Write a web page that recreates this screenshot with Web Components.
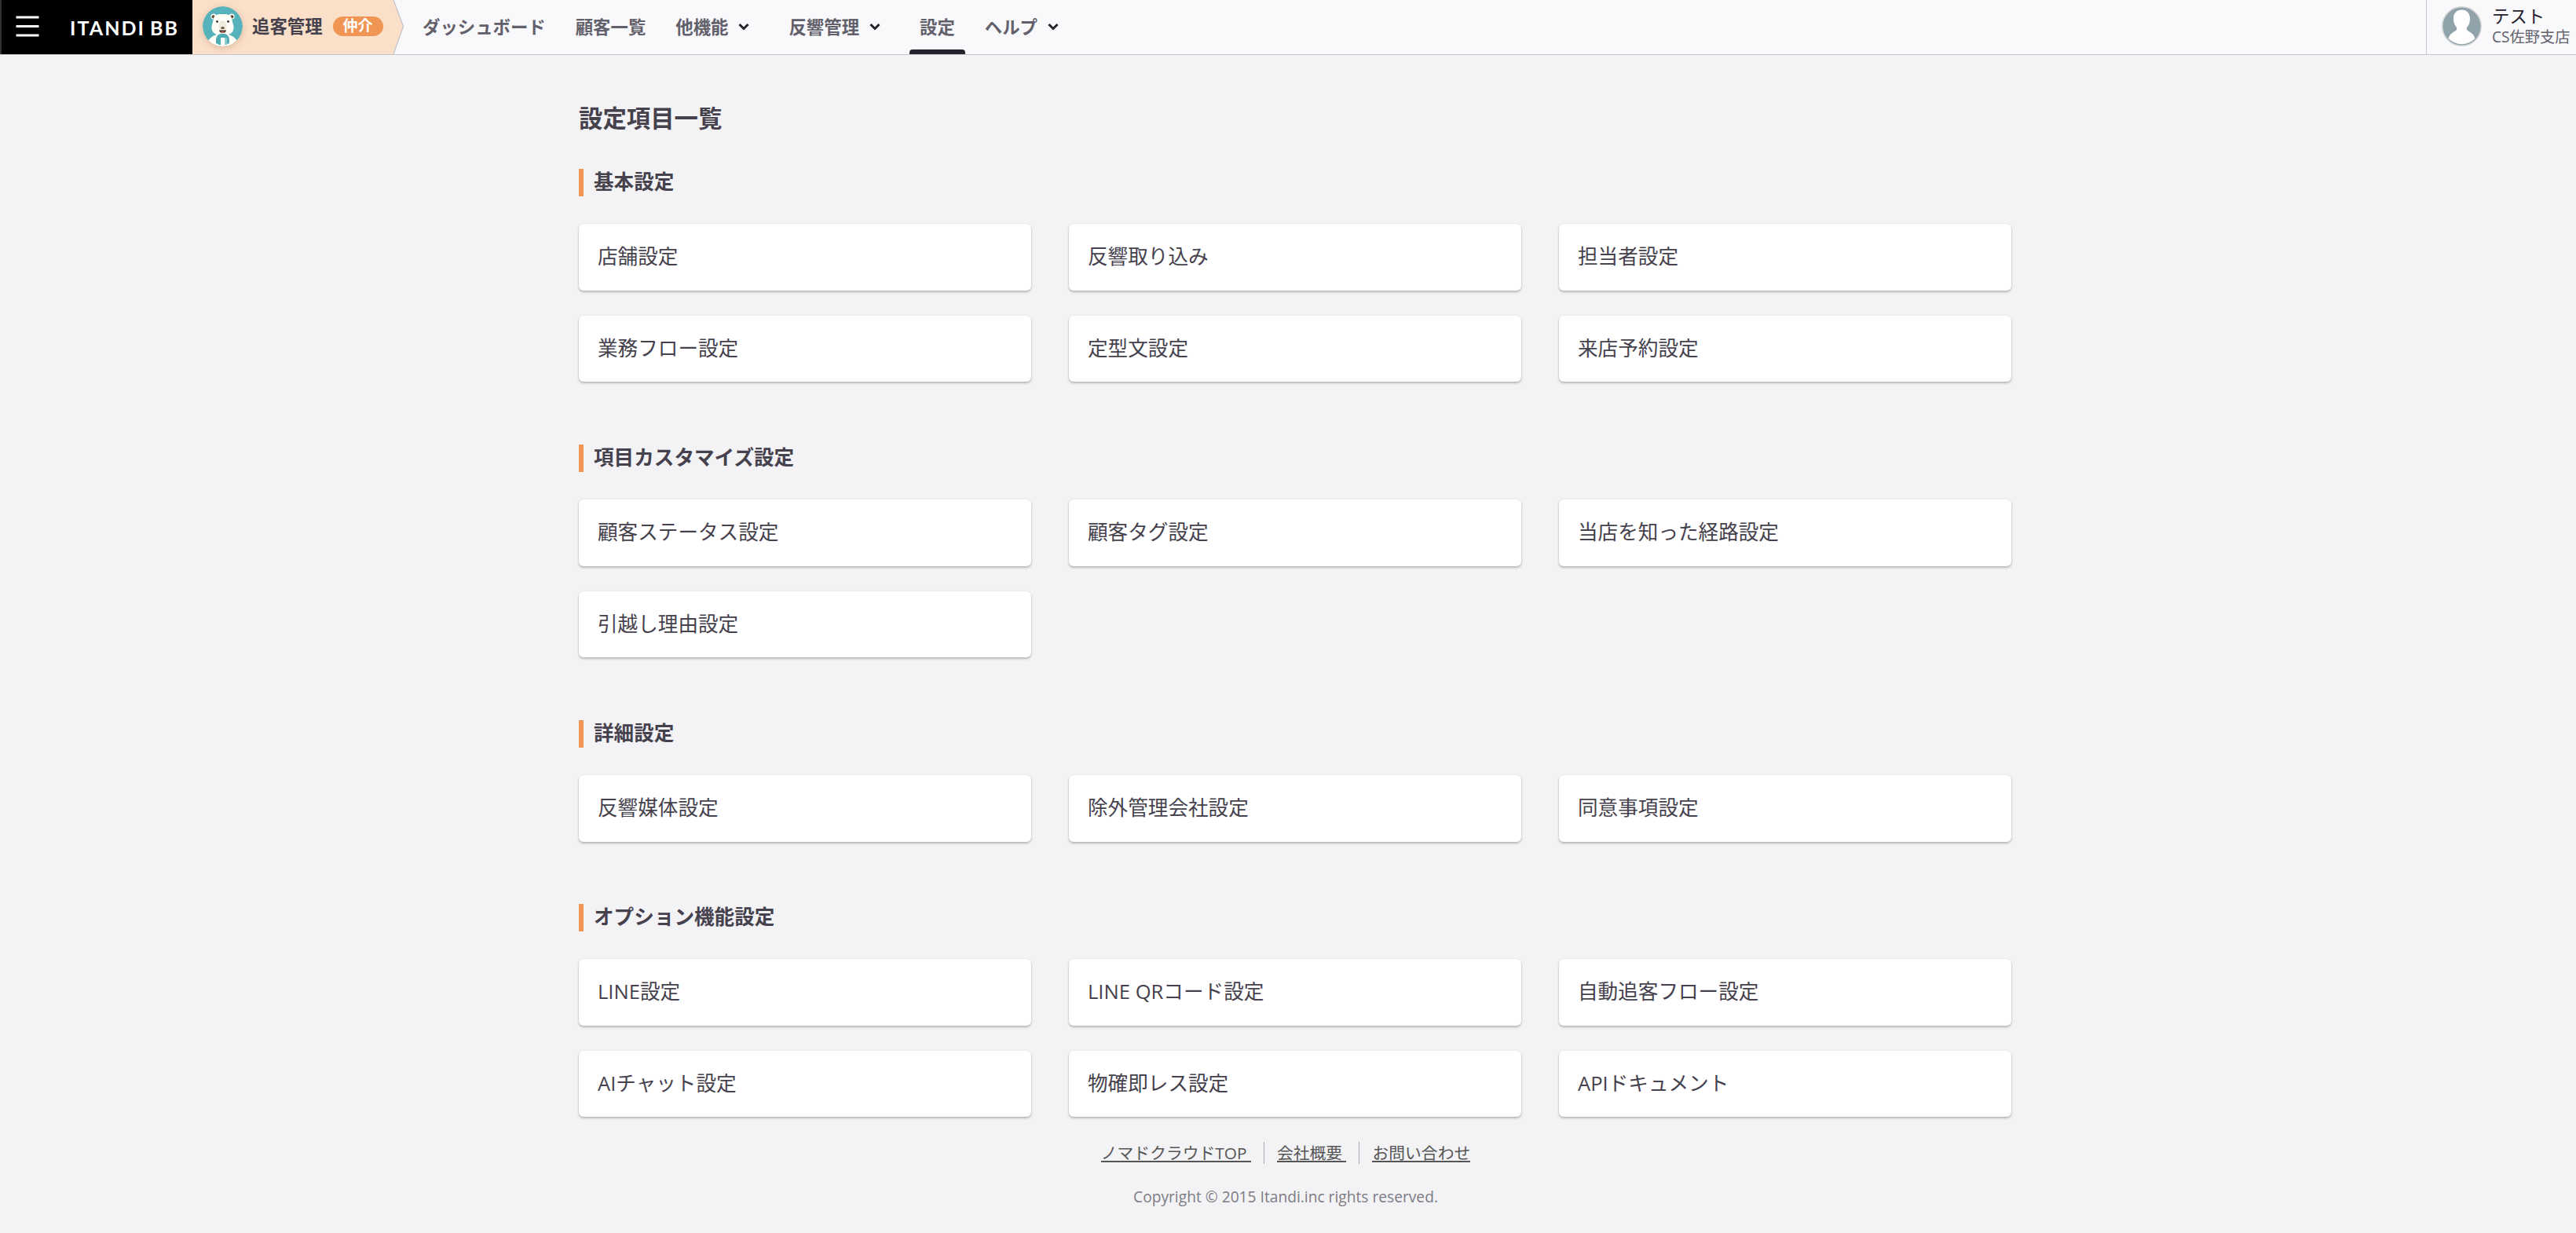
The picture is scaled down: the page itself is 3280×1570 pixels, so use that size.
<!DOCTYPE html>
<html lang="ja">
<head>
<meta charset="UTF-8">
<title>設定項目一覧</title>
<style>
  body {
    margin: 0;
    height: 1570px;
    overflow: hidden;
    background: #f3f3f6;
    color: #45414d;
    font-family: "Open Sans", "Noto Sans CJK JP", sans-serif;
  }
</style>
</head>
<body>
<settings-page></settings-page>

<script>
const SECTIONS = [
  { title: "基本設定", items: ["店舗設定", "反響取り込み", "担当者設定", "業務フロー設定", "定型文設定", "来店予約設定"] },
  { title: "項目カスタマイズ設定", items: ["顧客ステータス設定", "顧客タグ設定", "当店を知った経路設定", "引越し理由設定"] },
  { title: "詳細設定", items: ["反響媒体設定", "除外管理会社設定", "同意事項設定"] },
  { title: "オプション機能設定", items: ["LINE設定", "LINE QRコード設定", "自動追客フロー設定", "AIチャット設定", "物確即レス設定", "APIドキュメント"] }
];

class BrandLogo extends HTMLElement {
  constructor() {
    super();
    this.attachShadow({ mode: "open" });
    this.shadowRoot.innerHTML = `
      <style>
        :host {
          display: block;
          box-sizing: border-box;
          width: 245px;
          height: 69px;
          background: #000;
          border-left: 2px solid #333;
        }
        svg { display: block; }
        text { font: 700 25px Lato, sans-serif; fill: #fff; }
      </style>
      <svg width="243" height="69" viewBox="2 0 243 69">
        <path d="M20.5 22h29M20.5 33.5h29M20.5 45h29" stroke="#fff" stroke-width="3"/>
        <text x="89" y="44.5" textLength="94" lengthAdjust="spacing">ITANDI</text>
        <text x="191" y="44.5" textLength="35" lengthAdjust="spacing">BB</text>
      </svg>
    `;
  }
}

class ProductTab extends HTMLElement {
  constructor() {
    super();
    this.attachShadow({ mode: "open" });
    this.shadowRoot.innerHTML = `
      <style>
        :host {
          display: grid;
          width: 270px;
          height: 69px;
        }
        .shape, .content { grid-area: 1 / 1; }
        .content {
          display: flex;
          align-items: center;
          height: 67px;
          padding-left: 13px;
        }
        .bear {
          width: 51px;
          height: 51px;
          border-radius: 50%;
          box-shadow: 0 2px 8px rgba(120, 60, 20, .22);
        }
        .name {
          margin: 0 13px 0 12px;
          font-size: 22.4px;
          font-weight: 700;
          line-height: 32px;
          white-space: nowrap;
        }
        .badge {
          width: 64px;
          height: 25px;
          border-radius: 13px;
          background: #f09553;
          color: #fff;
          font-size: 19.2px;
          font-weight: 700;
          line-height: 24px;
          text-align: center;
        }
      </style>
      <svg class="shape" width="270" height="69">
        <path d="M0 0H256L268.5 33.5L256 69H0Z" fill="#fadfc9"/>
        <path d="M256 0L268.5 33.5L256 69" fill="none" stroke="#c5c5ca" stroke-width="1.3"/>
      </svg>
      <div class="content">
        <svg class="bear" viewBox="0 0 51 51">
          <defs><clipPath id="c"><circle cx="25.5" cy="25.5" r="25.5"/></clipPath></defs>
          <g clip-path="url(#c)">
            <rect width="51" height="51" fill="#56b3bb"/>
            <circle cx="14" cy="13" r="3.6" fill="#fffef8"/>
            <circle cx="37" cy="13" r="3.6" fill="#fffef8"/>
            <circle cx="13.7" cy="13.3" r="2.1" fill="#5d4634"/>
            <circle cx="37.3" cy="13.3" r="2.1" fill="#5d4634"/>
            <path d="M5 51C6 43 11 38 18 36H33C40 38 45 43 46 51Z" fill="#fffef8"/>
            <path d="M14 15C16 10 20 10 25.5 10S35 10 37 15C37.5 20 40 24 39.5 28C39 34 34 37 25.5 37S12 34 11.5 28C11 24 13.5 20 14 15Z" fill="#fffef8"/>
            <path d="M22 19Q25.5 18 29 19L31 27Q31 31 25.5 31T20 27Z" fill="#efebdf"/>
            <circle cx="18.5" cy="19.5" r="1.4" fill="#3d342e"/>
            <circle cx="32.5" cy="19.5" r="1.4" fill="#3d342e"/>
            <ellipse cx="25.5" cy="27.5" rx="2.3" ry="1.5" fill="#665236"/>
            <path d="M21 30.5H30Q29.5 34 25.5 34T21 30.5Z" fill="#4c3128"/>
            <path d="M22.5 33Q25.5 31.3 28.5 33Q25.5 34.5 22.5 33Z" fill="#ee8874"/>
            <path d="M17 49V43C17 38 20 34.7 25.5 34.7S34 38 34 43V49H28.5V40H23V49Z" fill="#50adb5"/>
            <path d="M28.5 40H31V49H28.5Z" fill="#8bc9cc"/>
            <path d="M9 51Q11 43 16 47L20 48V51ZM42 51Q40 43 35 47L31 48V51Z" fill="#fffef8"/>
          </g>
        </svg>
        <span class="name">追客管理</span>
        <span class="badge">仲介</span>
      </div>
    `;
  }
}

class NavItem extends HTMLElement {
  constructor() {
    super();
    this.attachShadow({ mode: "open" });
  }

  connectedCallback() {
    const caret = this.hasAttribute("menu")
      ? `<svg width="14" height="10" viewBox="0 0 14 10"><path d="M1.5 2L7 7.5L12.5 2" fill="none" stroke="#25222e" stroke-width="3"/></svg>`
      : "";
    this.shadowRoot.innerHTML = `
      <style>
        :host {
          display: block;
          box-sizing: border-box;
          height: 69px;
          padding: 0 13px;
          color: #62606a;
          font-size: 22.4px;
          font-weight: 700;
          white-space: nowrap;
        }
        :host([menu]) { margin-right: 12px; }
        div {
          display: flex;
          align-items: center;
          height: 67px;
        }
        svg { margin-left: 13px; }
        i { display: none; }
        :host([active]) i {
          display: block;
          height: 6px;
          margin: -4px -13px 0;
          border-radius: 4px 4px 0 0;
          background: #25222e;
        }
      </style>
      <div><slot></slot>${caret}</div><i></i>
    `;
  }
}

class AccountBox extends HTMLElement {
  constructor() {
    super();
    this.attachShadow({ mode: "open" });
    this.shadowRoot.innerHTML = `
      <style>
        :host {
          display: flex;
          align-items: center;
          box-sizing: border-box;
          width: 191px;
          height: 69px;
          padding: 0 0 2px 19px;
          border-left: 1px solid #c5c5ca;
          white-space: nowrap;
        }
        svg { flex: none; margin-right: 13px; }
        .name { color: #25222e; font-size: 22.4px; line-height: 26px; }
        .shop { color: #62606a; font-size: 19.2px; line-height: 25px; }
      </style>
      <svg width="51" height="51" viewBox="0 0 51 51">
        <circle cx="25.5" cy="25.5" r="24.7" fill="#90a3aa" stroke="#d2d5d5" stroke-width="1.6"/>
        <path d="M25.5 4.5C32 4.5 36 9 36 15.5C36 20 35 24 32 27V30C34 32.5 40 33 42.5 41Q35 48.3 25.5 48.3T8.5 41C11 33 17 32.5 19 30V27C16 24 15 20 15 15.5C15 9 19 4.5 25.5 4.5Z" fill="#fff"/>
      </svg>
      <div>
        <div class="name">テスト</div>
        <div class="shop">CS佐野支店</div>
      </div>
    `;
  }
}

class AppHeader extends HTMLElement {
  constructor() {
    super();
    this.attachShadow({ mode: "open" });
    this.shadowRoot.innerHTML = `
      <style>
        :host {
          display: flex;
          height: 69px;
          background: #f9f9fc;
          border-bottom: 1px solid #c5c5ca;
        }
        nav {
          display: flex;
          gap: 12px;
          flex: 1;
          margin-left: 10px;
        }
      </style>
      <brand-logo></brand-logo>
      <product-tab></product-tab>
      <nav>
        <nav-item>ダッシュボード</nav-item>
        <nav-item>顧客一覧</nav-item>
        <nav-item menu>他機能</nav-item>
        <nav-item menu>反響管理</nav-item>
        <nav-item active>設定</nav-item>
        <nav-item menu>ヘルプ</nav-item>
      </nav>
      <account-box></account-box>
    `;
  }
}

class SettingCard extends HTMLElement {
  constructor() {
    super();
    this.attachShadow({ mode: "open" });
    this.shadowRoot.innerHTML = `
      <style>
        :host {
          display: flex;
          align-items: center;
          box-sizing: border-box;
          padding: 0 24px 5px;
          border-radius: 6px;
          background: #fff;
          box-shadow: 0 2px 3px rgba(0, 0, 0, .24), 0 0 2px rgba(0, 0, 0, .1);
          font-size: 25.6px;
        }
      </style>
      <span><slot></slot></span>
    `;
  }
}

class SettingSection extends HTMLElement {
  constructor() {
    super();
    this.attachShadow({ mode: "open" });
    this.shadowRoot.innerHTML = `
      <style>
        :host { display: block; margin-bottom: 79px; }
        :host([rows="2"]) { margin-bottom: 80px; }
        h2 {
          box-sizing: border-box;
          height: 35px;
          margin: 0 0 35px;
          padding-left: 13px;
          border-left: 6px solid #f09553;
          font-size: 25.6px;
          line-height: 34px;
        }
        .cards {
          display: grid;
          grid-template-columns: repeat(3, 576px);
          grid-template-rows: 85px;
          grid-auto-rows: 84px;
          gap: 32px 48px;
        }
      </style>
      <h2><slot name="title"></slot></h2>
      <div class="cards"><slot></slot></div>
    `;
  }
}

class AppFooter extends HTMLElement {
  constructor() {
    super();
    this.attachShadow({ mode: "open" });
    this.shadowRoot.innerHTML = `
      <style>
        :host {
          display: block;
          width: 3274px;
          text-align: center;
        }
        .links {
          display: flex;
          justify-content: center;
          height: 28px;
        }
        a {
          box-sizing: border-box;
          height: 26px;
          border-bottom: 2px solid #555;
          color: #555;
          font-size: 20.8px;
          line-height: 29px;
          white-space: pre;
        }
        hr {
          width: 1px;
          height: 28px;
          margin: 0 16px;
          border: 0;
          background: #aaaaae;
        }
        p {
          margin: 28px 0 0;
          color: #7d7b84;
          font-size: 19.2px;
          line-height: 28px;
        }
      </style>
      <div class="links"><a>ノマドクラウドTOP </a><hr><a>会社概要 </a><hr><a>お問い合わせ</a></div>
      <p>Copyright © 2015 Itandi.inc rights reserved.</p>
    `;
  }
}

class SettingsPage extends HTMLElement {
  constructor() {
    super();
    this.attachShadow({ mode: "open" });
  }

  connectedCallback() {
    this.render();
  }

  render() {
    this.shadowRoot.innerHTML = `
      <style>
        :host { display: block; }
        main {
          width: 1824px;
          margin-left: 737px;
          padding-top: 58px;
        }
        h1 {
          height: 44px;
          margin: 0 0 43px;
          font-size: 30.4px;
          line-height: 45px;
        }
        setting-section:last-of-type { margin-bottom: 32px; }
      </style>
      <app-header></app-header>
      <main>
        <h1>設定項目一覧</h1>
        ${SECTIONS.map(s => `
          <setting-section rows="${Math.ceil(s.items.length / 3)}">
            <span slot="title">${s.title}</span>
            ${s.items.map(item => `<setting-card>${item}</setting-card>`).join("")}
          </setting-section>
        `).join("")}
      </main>
      <app-footer></app-footer>
    `;
  }
}

customElements.define("brand-logo", BrandLogo);
customElements.define("product-tab", ProductTab);
customElements.define("nav-item", NavItem);
customElements.define("account-box", AccountBox);
customElements.define("app-header", AppHeader);
customElements.define("setting-card", SettingCard);
customElements.define("setting-section", SettingSection);
customElements.define("app-footer", AppFooter);
customElements.define("settings-page", SettingsPage);
</script>
</body>
</html>
